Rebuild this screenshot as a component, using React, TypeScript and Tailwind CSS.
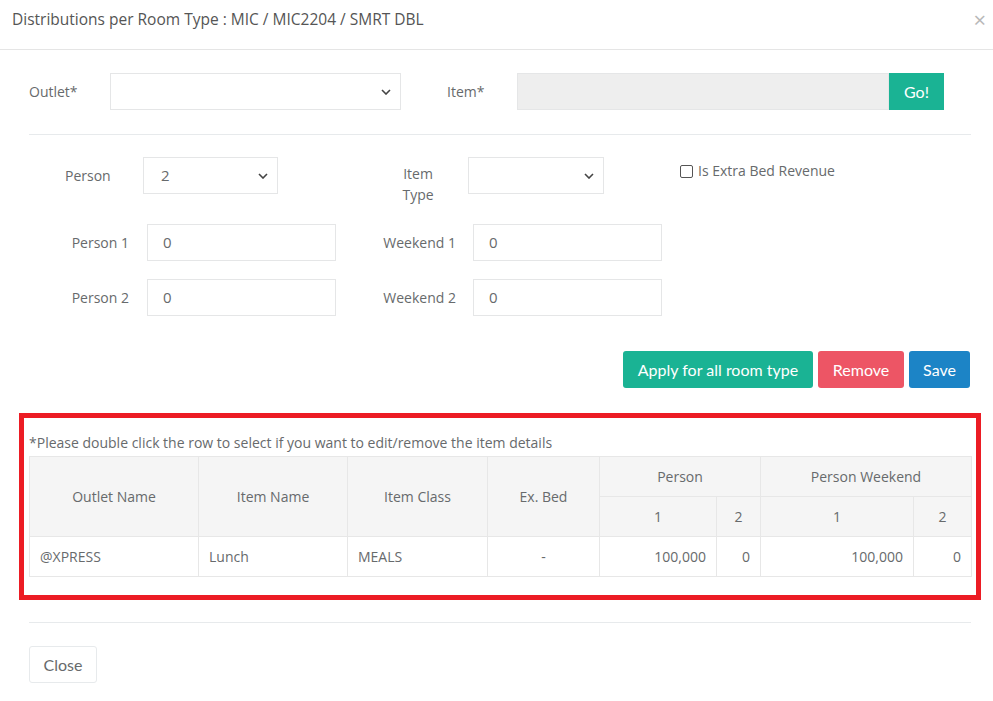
import React from 'react';

const body = { fontFamily: '"Open Sans", "Noto Sans", sans-serif' };
const btnFont = { fontFamily: 'Lato, "Open Sans", sans-serif' };

function Chevron() {
  return (
    <svg width="10" height="6" viewBox="0 0 10 6" className="shrink-0">
      <path d="M1 1 L5 5 L9 1" fill="none" stroke="#444" strokeWidth="1.6" />
    </svg>
  );
}

function FakeSelect({ width, value }: { width: string; value?: string }) {
  return (
    <div className={`${width} h-[37px] border border-[#e5e6e7] bg-white flex items-center justify-between pl-[17px] pr-[9px] text-[15px] text-[#676a6c]`}>
      <span>{value ?? ''}</span>
      <Chevron />
    </div>
  );
}

function TextBox({ value }: { value: string }) {
  return (
    <div className="w-[189px] h-[37px] border border-[#e5e6e7] bg-white flex items-center pl-[15px] text-[15px] text-[#676a6c]">
      {value}
    </div>
  );
}

export default function App() {
  const th = 'border border-[#e7e7e7] bg-[#f5f5f5] font-normal text-[14px] text-[#676a6c] text-center';
  const td = 'border border-[#e7e7e7] px-[10px] text-[14px] text-[#676a6c]';

  return (
    <div className="w-[993px] h-[701px] bg-white overflow-hidden" style={body}>
      {/* Header */}
      <div className="h-[50px] border-b border-[#e5e5e5] flex items-start justify-between pl-[12px] pr-[7px] pt-[8px]">
        <h4 className="text-[15.5px] text-[#555] leading-[22px]">
          Distributions per Room Type : MIC / MIC2204 / SMRT DBL
        </h4>
        <span className="text-[#b8b8b8] text-[22px] leading-[22px]">×</span>
      </div>

      <div className="pl-[29px] pr-[22px] pt-[23px]">
        {/* Outlet / Item */}
        <div className="flex items-center h-[37px]">
          <div className="w-[81px] text-[14px] text-[#676a6c]">Outlet*</div>
          <FakeSelect width="w-[291px]" />
          <div className="ml-[46px] w-[70px] text-[14px] text-[#676a6c]">Item*</div>
          <div className="w-[372px] h-[37px] bg-[#eeeeee] border border-[#e5e6e7]" />
          <button className="w-[55px] h-[37px] bg-[#1ab394] text-white text-[16px]" style={btnFont}>
            Go!
          </button>
        </div>

        <div className="mt-[24px] border-t border-[#e7eaec]" />

        {/* Person / Item Type */}
        <div className="mt-[22px] flex items-start pl-[36px]">
          <div className="w-[78px] h-[37px] flex items-center text-[14px] text-[#676a6c]">Person</div>
          <FakeSelect width="w-[135px]" value="2" />
          <div className="ml-[110px] w-[60px] pt-[6px] text-center text-[14px] leading-[21px] text-[#676a6c]">
            Item<br />Type
          </div>
          <div className="ml-[20px]">
            <FakeSelect width="w-[136px]" />
          </div>
          <label className="ml-[76px] mt-[4px] flex items-center gap-[5px] text-[14px] leading-[20px] text-[#676a6c]">
            <span className="w-[13px] h-[13px] border border-[#555] rounded-[2px] bg-white" />
            Is Extra Bed Revenue
          </label>
        </div>

        {/* Person 1 / Weekend 1 */}
        <div className="mt-[19px] flex items-center">
          <div className="w-[100px] text-right text-[14px] text-[#676a6c]">Person 1</div>
          <div className="ml-[18px]"><TextBox value="0" /></div>
          <div className="w-[120px] text-right text-[14px] text-[#676a6c]">Weekend 1</div>
          <div className="ml-[17px]"><TextBox value="0" /></div>
        </div>

        {/* Person 2 / Weekend 2 */}
        <div className="mt-[18px] flex items-center">
          <div className="w-[100px] text-right text-[14px] text-[#676a6c]">Person 2</div>
          <div className="ml-[18px]"><TextBox value="0" /></div>
          <div className="w-[120px] text-right text-[14px] text-[#676a6c]">Weekend 2</div>
          <div className="ml-[17px]"><TextBox value="0" /></div>
        </div>

        {/* Actions */}
        <div className="mt-[35px] flex justify-end gap-[5px] pr-[1px]" style={btnFont}>
          <button className="w-[190px] h-[37px] rounded-[3px] bg-[#1ab394] text-white text-[16px]">
            Apply for all room type
          </button>
          <button className="w-[86px] h-[37px] rounded-[3px] bg-[#ed5565] text-white text-[16px]">
            Remove
          </button>
          <button className="w-[61px] h-[37px] rounded-[3px] bg-[#1c84c6] text-white text-[16px]">
            Save
          </button>
        </div>

        {/* Highlighted table */}
        <div className="mt-[25px] -mx-[10px] border-[5px] border-[#ec1c24] px-[5px] pt-[15px] pb-[18px]">
          <p className="text-[14px] leading-[20px] text-[#676a6c] mb-[3px]">
            *Please double click the row to select if you want to edit/remove the item details
          </p>
          <table className="w-[942px] border-collapse table-fixed">
            <colgroup>
              <col className="w-[169px]" />
              <col className="w-[149px]" />
              <col className="w-[140px]" />
              <col className="w-[112px]" />
              <col className="w-[117px]" />
              <col className="w-[44px]" />
              <col className="w-[153px]" />
              <col className="w-[58px]" />
            </colgroup>
            <thead>
              <tr className="h-[40px]">
                <th rowSpan={2} className={th}>Outlet Name</th>
                <th rowSpan={2} className={th}>Item Name</th>
                <th rowSpan={2} className={th}>Item Class</th>
                <th rowSpan={2} className={th}>Ex. Bed</th>
                <th colSpan={2} className={th}>Person</th>
                <th colSpan={2} className={th}>Person Weekend</th>
              </tr>
              <tr className="h-[40px]">
                <th className={th}>1</th>
                <th className={th}>2</th>
                <th className={th}>1</th>
                <th className={th}>2</th>
              </tr>
            </thead>
            <tbody>
              <tr className="h-[40px]">
                <td className={td}>@XPRESS</td>
                <td className={td}>Lunch</td>
                <td className={td}>MEALS</td>
                <td className={`${td} text-center`}>-</td>
                <td className={`${td} text-right`}>100,000</td>
                <td className={`${td} text-right`}>0</td>
                <td className={`${td} text-right`}>100,000</td>
                <td className={`${td} text-right`}>0</td>
              </tr>
            </tbody>
          </table>
        </div>

        <div className="mt-[22px] border-t border-[#e7eaec]" />

        <button
          className="mt-[23px] w-[68px] h-[37px] rounded-[3px] border border-[#e7eaec] bg-white text-[16px] text-[#676a6c]"
          style={btnFont}
        >
          Close
        </button>
      </div>
    </div>
  );
}
